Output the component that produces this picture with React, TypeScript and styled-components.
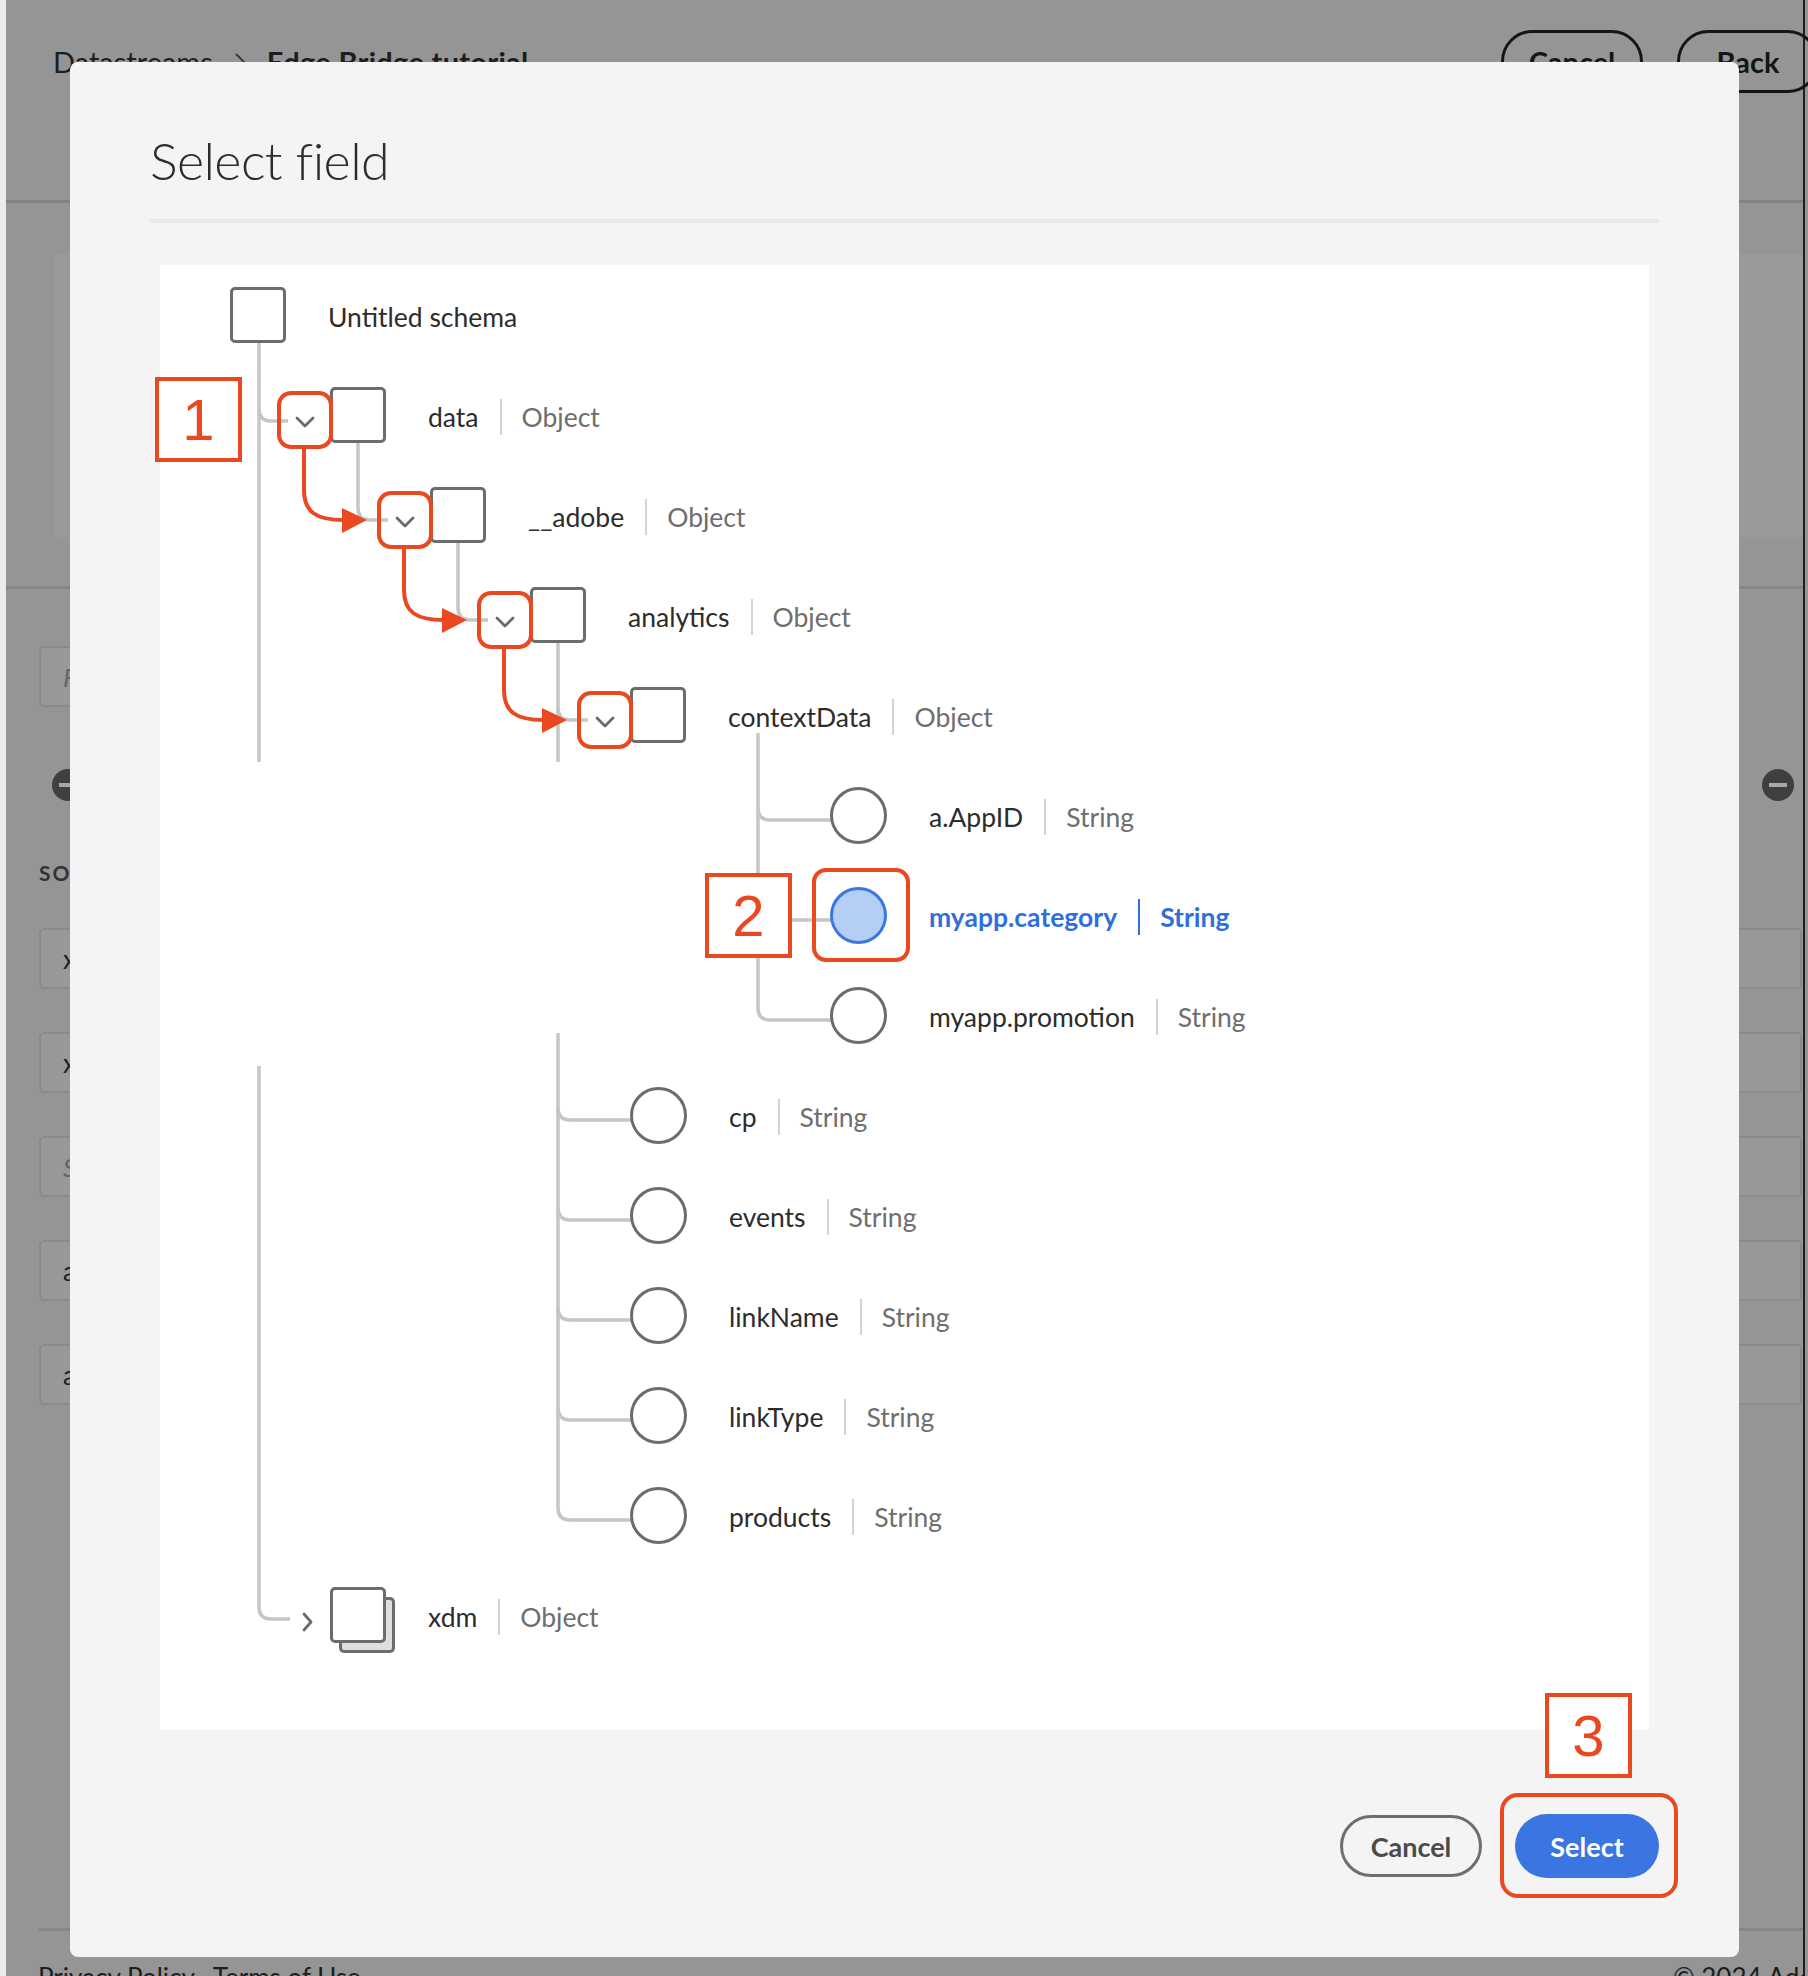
import React from 'react'
import styled, { createGlobalStyle } from 'styled-components'

const RED = '#ea4820'
const BLUE = '#2f6fdc'

const GlobalStyle = createGlobalStyle`
  html, body {
    margin: 0;
    padding: 0;
    background: #959595;
  }
  body {
    font-family: Lato, 'Noto Sans', sans-serif;
  }
  * {
    box-sizing: border-box;
  }
`

/* ---------- page behind the dialog ---------- */

const Stage = styled.div`
  position: relative;
  width: 1808px;
  height: 1976px;
  overflow: hidden;
`

const Page = styled.div`
  width: 1805px;
  height: 1976px;
  background: #959595;
  border-left: 6px solid #ececec;
  border-right: 2px solid #1e1e1e;
  display: flex;
  flex-direction: column;
`

const Header = styled.header`
  flex: none;
  height: 203px;
  display: flex;
  justify-content: space-between;
  align-items: flex-start;
  padding: 30px 0 0 47px;
  border-bottom: 3px solid #848484;
`

const Crumbs = styled.div`
  margin-top: 14px;
  display: flex;
  align-items: center;
  gap: 20px;
  font-size: 29px;
  color: #1d1d1d;
  b {
    font-weight: 700;
    letter-spacing: 0.3px;
  }
`

const HeaderActions = styled.div`
  display: flex;
  gap: 34px;
  margin-right: -16px;
`

const PageButton = styled.div`
  width: 142px;
  height: 63px;
  border: 3px solid #151515;
  border-radius: 32px;
  display: flex;
  align-items: center;
  justify-content: center;
  font-size: 29px;
  font-weight: 700;
  color: #151515;
`

const Hero = styled.section`
  flex: none;
  margin: 51px 0 0 48px;
  height: 283px;
  background: #9a9a9a;
  border-radius: 4px 0 0 4px;
`

const Rule = styled.div`
  flex: none;
  margin-top: 49px;
  height: 3px;
  background: #868686;
`

const Mapping = styled.section`
  display: flex;
  flex-direction: column;
  padding-left: 33px;
`

const Field = styled.div<{ $w?: number }>`
  width: ${({ $w }) => $w || 560}px;
  height: 61px;
  border: 2px solid #8a8a8a;
  border-radius: 5px;
  background: #989898;
  display: flex;
  align-items: center;
  padding-left: 22px;
  font-size: 26px;
  color: #222;
`

const Hint = styled.span`
  font-style: italic;
  color: #666;
`

const IconRow = styled.div`
  margin-top: 62px;
  height: 32px;
  display: flex;
  justify-content: space-between;
  padding: 0 9px 0 13px;
`

const RoundIcon = styled.div`
  width: 32px;
  height: 32px;
  border-radius: 50%;
  background: #3f3f3f;
  position: relative;
  &::before {
    content: '';
    position: absolute;
    left: 7px;
    right: 7px;
    top: 14px;
    height: 4px;
    background: #a8a8a8;
  }
`

const SectionLabel = styled.div`
  margin-top: 59px;
  font-size: 21px;
  font-weight: 700;
  letter-spacing: 2px;
  color: #333;
`

const MapRow = styled.div`
  margin-top: 43px;
  display: flex;
  justify-content: space-between;
  padding-right: 1px;
  &:first-of-type {
    margin-top: 44px;
  }
`

const PageFooter = styled.footer`
  margin: auto 0 0 32px;
  height: 48px;
  border-top: 3px solid #868686;
  padding: 30px 0 0 0;
  display: flex;
  justify-content: space-between;
  font-size: 26px;
  color: #1d1d1d;
  white-space: nowrap;
  span + span {
    margin-left: 18px;
  }
`

/* ---------- dialog ---------- */

const Dialog = styled.div`
  position: absolute;
  left: 70px;
  top: 62px;
  width: 1669px;
  height: 1895px;
  background: #f4f4f4;
  border-radius: 8px;
  padding: 66px 80px 79px;
  display: flex;
  flex-direction: column;
`

const Title = styled.h1`
  margin: 0;
  font-weight: 300;
  font-size: 52px;
  line-height: 64px;
  letter-spacing: -0.6px;
  color: #2c2c2c;
`

const Divider = styled.div`
  margin-top: 27px;
  height: 4px;
  background: #e8e8e8;
`

const TreePanel = styled.div`
  position: relative;
  margin: 42px 10px 0;
  height: 1465px;
  background: #fff;
`

const Lines = styled.svg`
  position: absolute;
  left: 0;
  top: 0;
`

const Rows = styled.div`
  position: relative;
  display: flex;
  flex-direction: column;
`

const Row = styled.div<{ $depth: number }>`
  height: 100px;
  display: flex;
  align-items: center;
  padding-left: ${({ $depth }) => 20 + $depth * 100}px;
`

const Toggle = styled.span`
  width: 50px;
  height: 20px;
  margin-top: 14px;
  display: flex;
  justify-content: center;
  align-items: center;
`

const Checkbox = styled.span<{ $stacked?: boolean }>`
  flex: none;
  width: 56px;
  height: 56px;
  border: 3px solid #6c6c6c;
  border-radius: 5px;
  background: #fff;
  box-shadow: ${({ $stacked }) => ($stacked ? '9px 10px 0 -3px #dedede, 9px 10px 0 0 #6c6c6c' : 'none')};
`

const Radio = styled.span<{ $on?: boolean }>`
  flex: none;
  width: 57px;
  height: 57px;
  border: 3px solid ${({ $on }) => ($on ? '#3a77e3' : '#6c6c6c')};
  border-radius: 50%;
  background: ${({ $on }) => ($on ? '#b5cef5' : '#fff')};
`

const Label = styled.span<{ $on?: boolean }>`
  margin-left: 42px;
  padding-top: 3px;
  display: flex;
  align-items: center;
  font-size: 26.5px;
  font-weight: ${({ $on }) => ($on ? 700 : 400)};
  color: ${({ $on }) => ($on ? BLUE : '#2c2c2c')};
  white-space: nowrap;
`

const Sep = styled.span<{ $on?: boolean }>`
  width: 2px;
  height: 36px;
  margin: 0 20px 0 21px;
  background: ${({ $on }) => ($on ? BLUE : '#d4d4d4')};
`

const Type = styled.span<{ $on?: boolean }>`
  color: ${({ $on }) => ($on ? BLUE : '#6e6e6e')};
`

const Actions = styled.div`
  margin-top: 84px;
  display: flex;
  justify-content: flex-end;
  align-items: center;
  gap: 33px;
`

const Button = styled.div<{ $primary?: boolean }>`
  position: relative;
  height: ${({ $primary }) => ($primary ? 64 : 62)}px;
  width: ${({ $primary }) => ($primary ? 144 : 142)}px;
  border-radius: 32px;
  border: ${({ $primary }) => ($primary ? 'none' : '3px solid #6e6e6e')};
  background: ${({ $primary }) => ($primary ? '#3a75e2' : 'transparent')};
  color: ${({ $primary }) => ($primary ? '#fff' : '#4b4b4b')};
  display: flex;
  align-items: center;
  justify-content: center;
  font-size: 27px;
  font-weight: 700;
`

/* ---------- callouts ---------- */

const Tag = styled.div<{ $x: number; $y: number }>`
  position: absolute;
  left: ${({ $x }) => $x}px;
  top: ${({ $y }) => $y}px;
  width: 87px;
  height: 85px;
  border: 4px solid ${RED};
  background: #fff;
  display: flex;
  align-items: center;
  justify-content: center;
  font-family: 'Liberation Sans', Arial, sans-serif;
  font-size: 58px;
  font-weight: 400;
  line-height: 1;
  color: ${RED};
  z-index: 2;
`

const Ring = styled.div<{ $x: number; $y: number; $w: number; $h: number; $r?: number }>`
  position: absolute;
  left: ${({ $x }) => $x}px;
  top: ${({ $y }) => $y}px;
  width: ${({ $w }) => $w}px;
  height: ${({ $h }) => $h}px;
  border: 4px solid ${RED};
  border-radius: ${({ $r }) => $r || 14}px;
  z-index: 2;
`

type Node = {
  name: string
  type?: string
  depth: number
  kind: 'root' | 'open' | 'closed' | 'leaf'
  selected?: boolean
}

const nodes: Node[] = [
  { name: 'Untitled schema', depth: 0, kind: 'root' },
  { name: 'data', type: 'Object', depth: 1, kind: 'open' },
  { name: '__adobe', type: 'Object', depth: 2, kind: 'open' },
  { name: 'analytics', type: 'Object', depth: 3, kind: 'open' },
  { name: 'contextData', type: 'Object', depth: 4, kind: 'open' },
  { name: 'a.AppID', type: 'String', depth: 6, kind: 'leaf' },
  { name: 'myapp.category', type: 'String', depth: 6, kind: 'leaf', selected: true },
  { name: 'myapp.promotion', type: 'String', depth: 6, kind: 'leaf' },
  { name: 'cp', type: 'String', depth: 4, kind: 'leaf' },
  { name: 'events', type: 'String', depth: 4, kind: 'leaf' },
  { name: 'linkName', type: 'String', depth: 4, kind: 'leaf' },
  { name: 'linkType', type: 'String', depth: 4, kind: 'leaf' },
  { name: 'products', type: 'String', depth: 4, kind: 'leaf' },
  { name: 'xdm', type: 'Object', depth: 1, kind: 'closed' },
]

const branch = (x: number, y: number, x2: number) => `M${x},${y - 12} Q${x},${y} ${x + 12},${y} H${x2}`

const connectors = [
  'M99,78 V497',
  branch(99, 156, 128),
  'M99,801 V1342 Q99,1354 111,1354 H130',
  'M198,178 V243 Q198,255 210,255 H228',
  'M298,278 V343 Q298,355 310,355 H328',
  'M398,378 V497',
  branch(398, 455, 428),
  'M398,768 V1243 Q398,1255 410,1255 H471',
  ...[855, 955, 1055, 1155].map((y) => branch(398, y, 471)),
  'M598,468 V743 Q598,755 610,755 H671',
  branch(598, 555, 671),
  branch(598, 655, 671),
]

const Chevron = ({ open }: { open: boolean }) => (
  <svg width="20" height="20" viewBox="0 0 20 20">
    <polyline
      points={open ? '2,6 10,14 18,6' : '9,2 16,10 9,18'}
      fill="none"
      stroke="#6a6a6a"
      strokeWidth="2.8"
      strokeLinecap="round"
      strokeLinejoin="round"
    />
  </svg>
)

const TreeRow = ({ node }: { node: Node }) => {
  const on = node.selected
  return (
    <Row $depth={node.depth}>
      <Toggle>{node.kind === 'open' || node.kind === 'closed' ? <Chevron open={node.kind === 'open'} /> : null}</Toggle>
      {node.kind === 'leaf' ? <Radio $on={on} /> : <Checkbox $stacked={node.kind === 'closed'} />}
      <Label $on={on}>
        {node.name}
        {node.type && (
          <>
            <Sep $on={on} />
            <Type $on={on}>{node.type}</Type>
          </>
        )}
      </Label>
    </Row>
  )
}

const App = () => {
  return (
    <Stage>
      <GlobalStyle />
      <Page>
        <Header>
          <Crumbs>
            <span>Datastreams</span>
            <svg width="14" height="22" viewBox="0 0 14 22">
              <polyline points="3,3 11,11 3,19" fill="none" stroke="#3a3a3a" strokeWidth="2" />
            </svg>
            <b>Edge Bridge tutorial</b>
          </Crumbs>
          <HeaderActions>
            <PageButton>Cancel</PageButton>
            <PageButton>Back</PageButton>
          </HeaderActions>
        </Header>
        <Hero />
        <Rule />
        <Mapping>
          <Field style={{ marginTop: 57 }} $w={700}>
            <Hint>F</Hint>
          </Field>
          <IconRow>
            <RoundIcon />
            <RoundIcon />
          </IconRow>
          <SectionLabel>SOURCE</SectionLabel>
          {['x', 'x', 'S', 'a', 'a'].map((c, i) => (
            <MapRow key={i}>
              <Field>{c === 'S' ? <Hint>{c}</Hint> : c}</Field>
              <Field $w={500} />
            </MapRow>
          ))}
        </Mapping>
        <PageFooter>
          <div>
            <span>Privacy Policy</span>
            <span>Terms of Use</span>
          </div>
          <div style={{ width: 130, overflow: 'hidden' }}>© 2024 Adobe. All rights reserved.</div>
        </PageFooter>
      </Page>

      <Dialog>
        <Title>Select field</Title>
        <Divider />
        <TreePanel>
          <Lines width="1490" height="1465" viewBox="0 0 1490 1465">
            <g fill="none" stroke="#c6c6c6" strokeWidth="3.5">
              {connectors.map((d, i) => (
                <path key={i} d={d} />
              ))}
            </g>
          </Lines>
          <Rows>
            {nodes.map((n) => (
              <TreeRow key={n.name} node={n} />
            ))}
          </Rows>
          <Lines width="1490" height="1465" viewBox="0 0 1490 1465" style={{ zIndex: 3 }}>
            {[0, 100, 200].map((d) => (
              <g key={d} fill={RED} stroke={RED}>
                <path
                  d={`M${144 + d},${184 + d} V${225 + d} C${144 + d},${247 + d} ${156 + d},${255 + d} ${184 + d},${255 + d}`}
                  fill="none"
                  strokeWidth="4"
                />
                <polygon points={`${182 + d},${243 + d} ${207 + d},${255 + d} ${182 + d},${268 + d}`} stroke="none" />
              </g>
            ))}
          </Lines>
          <Tag $x={-5} $y={112}>1</Tag>
          {[0, 1, 2, 3].map((i) => (
            <Ring key={i} $x={117 + i * 100} $y={126 + i * 100} $w={56} $h={58} />
          ))}
          <Tag $x={545} $y={608}>2</Tag>
          <Ring $x={652} $y={603} $w={98} $h={94} />
        </TreePanel>
        <Actions>
          <Button>Cancel</Button>
          <Button $primary>
            Select
            <Ring $x={-15} $y={-21} $w={178} $h={105} $r={18} />
            <Tag $x={30} $y={-121}>3</Tag>
          </Button>
        </Actions>
      </Dialog>
    </Stage>
  )
}

export default App
